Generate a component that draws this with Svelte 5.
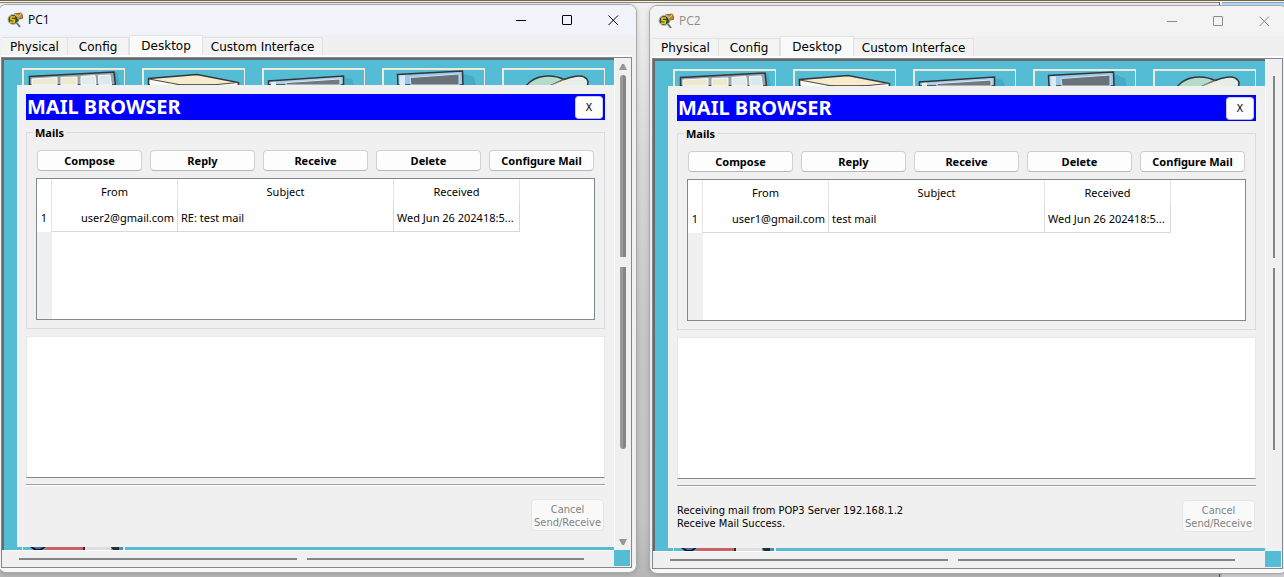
<script>
  const tabs = ['Physical', 'Config', 'Desktop', 'Custom Interface'];
  const actions = ['Compose', 'Reply', 'Receive', 'Delete', 'Configure Mail'];
  const windows = [
    {
      id: 'pc1',
      title: 'PC1',
      active: true,
      mails: [{ from: 'user2@gmail.com', subject: 'RE: test mail', received: 'Wed Jun 26 202418:5...' }],
      status: []
    },
    {
      id: 'pc2',
      title: 'PC2',
      active: false,
      mails: [{ from: 'user1@gmail.com', subject: 'test mail', received: 'Wed Jun 26 202418:5...' }],
      status: ['Receiving mail from POP3 Server 192.168.1.2', 'Receive Mail Success.']
    }
  ];
</script>

{#snippet tileArt(kind)}
  <svg class="art" viewBox="0 0 99 15" aria-hidden="true">
    {#if kind === 0}
      <path d="M80 3 L93 2 L96 15 H80Z" fill="#46abc4" />
      <path d="M5.5 15 V6.5 L90 2 L91.500 15Z" fill="#9aa3ac" stroke="#33363b" stroke-width="1.500" />
      <path d="M8 15 V9 L33 7.500 V15Z" fill="#ece9cf" stroke="#f8fafa" />
      <path d="M37 15 V7.500 L53 7 V15Z" fill="#ece9cf" stroke="#f8fafa" />
      <path d="M57 15 V6.500 L71 5.500 L72 15Z" fill="#e2ecea" stroke="#f8fafa" />
      <path d="M75 15 L74.500 5.500 L86 5 L87.500 15Z" fill="#d9eaee" stroke="#f8fafa" />
    {:else if kind === 1}
      <path d="M4.500 15 V8.500 L53 4.500 L94.500 12.500 V15Z" fill="#f6eccb" stroke="#33363b" stroke-width="1.500" />
      <path d="M6 15 V10 L36 15Z" fill="#fdfdf8" />
      <path d="M5 9 L40 15.500" stroke="#4a4a46" />
      <path d="M62 15.500 L94 12.500 V16Z" fill="#fdfdf8" stroke="#4a4a46" />
    {:else if kind === 2}
      <path d="M78 7 L88 9 L90 15 H78Z" fill="#46abc4" />
      <path d="M4.500 15 V11 L79.500 6 V15Z" fill="#a9cfe8" stroke="#33363b" stroke-width="1.500" />
      <path d="M7 15 V12 L12 11.700 V15Z" fill="#e3f1f8" />
      <path d="M22 15 V12.500 L76 9 V15Z" fill="#70797f" stroke="#dbe9f2" />
    {:else if kind === 3}
      <path d="M78 3 L90 7 L92 15 H78Z" fill="#46abc9" />
      <path d="M14 15 L13.500 4.500 L78.500 1 L79 15Z" fill="#9cc8e8" stroke="#33363b" stroke-width="1.500" />
      <path d="M15.500 15 V5.500 L21 5.300 V15Z" fill="#d8e9f4" />
      <path d="M27 15 L26 7.500 L75 4 V15Z" fill="#697279" stroke="#cfe3f0" />
    {:else if kind === 4}
      <path d="M22 16 C31 4 49 4 60 9.500 L46 16Z" fill="#b5dccb" stroke="#33363b" stroke-width="1.500" />
      <path d="M45 16 L62 9 C70 6 77 5 80 7 C84 9 85 12 83 16Z" fill="#e6eee8" />
      <path d="M45 16 L62 9" stroke="#7f8a86" fill="none" />
      <path d="M60 9.500 C68 6 77 5 80 7 C84 9 85 12 83 16" fill="none" stroke="#33363b" stroke-width="1.500" />
      <path d="M49 15 L62 10 L66 12 L58 16Z" fill="#f2ecd8" />
    {/if}
  </svg>
{/snippet}

{#snippet appIcon()}
  <svg class="app-icon" viewBox="0 0 16 16" aria-hidden="true">
    <path d="M7 2 L14.500 1 L16 6 L9 8Z" fill="#c98b2b" stroke="#6b4612" stroke-width="0.800" />
    <path d="M7 2 L12 4.500 L14.500 1" fill="none" stroke="#f2c766" />
    <path d="M9 10 L13 15" stroke="#6c6f74" stroke-width="2" />
    <circle cx="6" cy="7.500" r="5" fill="#3b4a1c" stroke="#b9bdc0" />
    <path d="M8.500 4 L12 9 L8 11Z" fill="#1d5f1f" />
    <path d="M8 5 L4 5 L4 7.500 L7.500 8 L7 10.500 L3 10" fill="none" stroke="#f0c419" stroke-width="1.600" />
  </svg>
{/snippet}

<main class="desktop">
  <div class="app-strip" aria-hidden="true"><div class="edge"></div><div class="sky"></div></div>
  <div class="app-strip foot" aria-hidden="true"><div class="edge"></div><div class="sky"></div></div>
  <div class="windows">
    {#each windows as win (win.id)}
      <section class="window" class:inactive={!win.active} aria-label={win.title}>
        <header class="titlebar">
          {@render appIcon()}
          <h1>{win.title}</h1>
          <button class="control" aria-label="Minimize">
            <svg viewBox="0 0 11 11"><path d="M0 5.500 H10" /></svg>
          </button>
          <button class="control" aria-label="Maximize">
            <svg viewBox="0 0 11 11"><rect x="0.500" y="0.500" width="9" height="9" rx="0.500" /></svg>
          </button>
          <button class="control" aria-label="Close">
            <svg viewBox="0 0 11 11"><path d="M0.500 0.500 L10 10 M10 0.500 L0.500 10" /></svg>
          </button>
        </header>

        <div class="tabs" role="tablist">
          {#each tabs as tab, i}
            <button role="tab" class:wide={i === 1 || i === 2} class:selected={i === 2} aria-selected={i === 2}>{tab}</button>
          {/each}
        </div>

        <div class="frame">
          <div class="viewport">
            <div class="tiles">
              {#each [0, 1, 2, 3, 4] as kind}
                <div class="tile">{@render tileArt(kind)}</div>
              {/each}
            </div>

            <div class="mail">
              <div class="banner">
                <h2>MAIL BROWSER</h2>
                <button class="push close" aria-label="Close mail browser">X</button>
              </div>

              <fieldset>
                <legend>Mails</legend>
                <div class="actions">
                  {#each actions as action}
                    <button class="push">{action}</button>
                  {/each}
                </div>
                <div class="list">
                  <table>
                    <colgroup><col class="c-num" /><col class="c-side" /><col class="c-subject" /><col class="c-side" /></colgroup>
                    <thead>
                      <tr><td></td><th scope="col">From</th><th scope="col">Subject</th><th scope="col">Received</th></tr>
                    </thead>
                    <tbody>
                      {#each win.mails as mail, n}
                        <tr>
                          <th scope="row">{n + 1}</th>
                          <td class="from">{mail.from}</td>
                          <td>{mail.subject}</td>
                          <td>{mail.received}</td>
                        </tr>
                      {/each}
                    </tbody>
                  </table>
                </div>
              </fieldset>

              <textarea class="body" aria-label="Message" readonly></textarea>

              <footer>
                <p>
                  {#each win.status as line}<span>{line}</span>{/each}
                </p>
                <button class="push cancel" disabled>Cancel<br />Send/Receive</button>
              </footer>
            </div>

            <div class="peek">
              <svg viewBox="0 0 103 3" aria-hidden="true">
                <path d="M0 0 H1 V3 H0Z M101 0 H103 V3 H101Z" fill="#ece9d8" />
                <path d="M8 0 H24 L20 3 H12Z" fill="#15161c" />
                <path d="M11 0 H21 L18 2 H14Z" fill="#4a6ca8" />
                <path d="M25 0 H62 V3 H22Z" fill="#cc6163" />
                <path d="M62 0 H89 V3 H62Z" fill="#dedede" />
                <path d="M61 0 H63 V3 H61Z M89 0 H97 V3 H91Z" fill="#2a2c30" />
                <path d="M97 0 H101 V3 H97Z" fill="#3b93c4" />
              </svg>
            </div>
          </div>

          <div class="vscroll" aria-hidden="true">
            <svg class="arrow" viewBox="0 0 8 6"><path d="M3 0 H5 L8 6 H0Z" /></svg>
            <i class="thumb"></i>
            <i class="thumb second"></i>
            <i class="rest"></i>
            <svg class="arrow" viewBox="0 0 8 6"><path d="M0 0 H8 L5 6 H3Z" /></svg>
          </div>
          <div class="hscroll" aria-hidden="true"><i></i><i></i></div>
          <div class="corner"></div>
        </div>
      </section>
    {/each}
  </div>
</main>

<style>
  :global(body) {
    overflow: hidden;
    background: #c4c4c4;
  }

  * {
    box-sizing: border-box;
  }

  .desktop {
    position: relative;
    min-height: 100vh;
    padding-top: 4px;
    overflow: hidden;
    background: linear-gradient(#f0f0f0 0, #d9d9d9 150px, #c6c6c6 340px, #c4c4c4 520px, #b6b6b6 100%);
    color: #000;
    font: 11px/15px "Noto Sans", sans-serif;
  }

  .app-strip {
    position: absolute;
    inset: 0 0 auto;
    display: flex;
    height: 7px;
    border-top: 1px solid #75663a;
    padding-top: 1px;
    background: #f4f2ee;
  }

  .app-strip.foot {
    inset: auto 0 0;
    height: 5px;
    border: 0;
    padding: 0;
    background: none;
  }

  .edge {
    width: 95%;
    border-top: 1px solid #85858d;
    border-right: 1px solid #55555d;
    background: #efefef;
  }

  .foot .edge {
    border-top: 0;
    background: none;
  }

  .sky {
    flex: 1;
    margin-left: 2px;
    border-top: 1px solid #80a8cc;
    background: #b8daf6;
  }

  .foot .sky {
    border: 0;
    background: #d0d2d4;
  }

  .windows {
    position: relative;
    display: flex;
    align-items: flex-start;
    gap: 12px;
    margin: 0 -4px 0 -2px;
  }

  .window {
    flex: 1;
    min-width: 0;
    padding: 0 4px 4px 2px;
    border: 1px solid #a8a8a8;
    border-radius: 8px;
    background: #f0f0f0;
    box-shadow: inset 0 -4px 0 #f8f8f8, 0 1px 5px rgba(0, 0, 0, 0.15);
  }

  .window.inactive {
    margin-top: 1px;
  }

  .titlebar {
    display: flex;
    align-items: center;
    height: 30px;
    margin: 0 -4px 0 -2px;
    padding-left: 8px;
    border-radius: 7px 7px 0 0;
    background: #f0f3f9;
  }

  .inactive .titlebar {
    background: #f3f3f3;
    color: #8c8c8c;
  }

  .app-icon {
    width: 16px;
    height: 16px;
  }

  h1 {
    flex: 1;
    margin: 0 0 0 5px;
    font: 12px/16px "Open Sans", sans-serif;
  }

  .control {
    display: grid;
    place-items: center;
    width: 46px;
    height: 30px;
    padding: 0;
    border: 0;
    background: none;
    color: inherit;
  }

  .control svg {
    width: 11px;
    height: 11px;
    fill: none;
    stroke: currentColor;
  }

  .tabs {
    display: flex;
    align-items: flex-end;
    height: 22px;
    padding-left: 1px;
    border-bottom: 2px solid #fcfcfc;
  }

  .tabs button {
    height: 18px;
    padding: 1px 8px 0;
    border: 1px solid #e2e2e2;
    border-width: 1px 1px 0 0;
    background: #f3f3f3;
    color: #000;
    font: 12px/16px "DejaVu Sans", sans-serif;
    white-space: nowrap;
  }

  .tabs .wide {
    padding: 1px 11px 0;
  }

  .tabs .selected {
    height: 20px;
    border-left-width: 1px;
    background: #fafafa;
  }

  .frame {
    display: grid;
    grid-template-columns: minmax(0, 1fr) 17px;
    grid-template-rows: auto 17px;
    border: 1px solid #828790;
  }

  .viewport {
    padding-top: 8px;
    border: 2px solid #696969;
    border-width: 2px 0 0 2px;
    background: #54bdd5;
  }

  .tiles {
    display: flex;
    justify-content: space-between;
    padding: 0 9px 0 18px;
  }

  .tile {
    width: 103px;
    height: 17px;
    border: 2px solid #ece9d8;
    border-bottom: 0;
    border-right-width: 1px;
  }

  .art {
    display: block;
    width: 99px;
    height: 15px;
  }

  .mail {
    margin-left: 13px;
    padding: 9px 9px 16px;
    background: #f0f0f0;
  }

  .banner {
    display: flex;
    align-items: center;
    justify-content: space-between;
    height: 26px;
    padding: 0 2px 0 1px;
    background: #00f;
  }

  h2 {
    margin: 0;
    color: #fff;
    font: bold 20px/26px "Noto Sans", sans-serif;
  }

  .push {
    height: 21px;
    padding: 0;
    border: 1px solid #d0d0d0;
    border-bottom-color: #b8b8b8;
    border-radius: 4px;
    background: #fdfdfd;
    color: #000;
    font: bold 11px/19px "Noto Sans", sans-serif;
    white-space: nowrap;
  }

  .push.close {
    width: 28px;
    height: 23px;
    padding-top: 1px;
    font: 11px/20px "DejaVu Sans Condensed", "DejaVu Sans", sans-serif;
  }

  fieldset {
    min-width: 0;
    margin: 5px 0 0;
    padding: 10px 9px 8px;
    border: 1px solid #dcdcdc;
  }

  legend {
    margin-left: -3px;
    padding: 0 2px;
    font: bold 11px/15px "Noto Sans", sans-serif;
  }

  .actions {
    display: grid;
    grid-template-columns: repeat(5, 1fr);
    gap: 8px;
    padding: 0 1px;
  }

  .list {
    height: 142px;
    margin-top: 7px;
    border: 1px solid #828790;
    background: linear-gradient(90deg, #f0f0f0 15px, #fff 15px);
  }

  table {
    width: 483px;
    border-collapse: separate;
    border-spacing: 0;
    table-layout: fixed;
    background: #fff;
  }

  .c-num {
    width: 15px;
  }

  .c-side {
    width: 126px;
  }

  .c-subject {
    width: 216px;
  }

  th,
  td {
    height: 30px;
    padding: 1px 3px 0;
    border-right: 1px solid #d8d8d8;
    font-weight: normal;
    text-align: left;
    white-space: nowrap;
  }

  thead th,
  thead td {
    height: 23px;
    border-color: #e5e5e5;
    text-align: center;
  }

  tbody td {
    border-bottom: 1px solid #d8d8d8;
  }

  tbody th {
    padding: 1px 0 0;
    border-color: #e5e5e5;
    text-align: center;
  }

  td.from {
    text-align: right;
  }

  .body {
    display: block;
    width: 100%;
    height: 142px;
    margin-top: 7px;
    padding: 4px;
    border: 1px solid #e8e8e8;
    border-bottom-color: #858585;
    outline: 0;
    background: #fff;
    resize: none;
  }

  footer {
    display: flex;
    justify-content: space-between;
    margin-top: 6px;
    padding: 14px 1px 0 0;
    border-top: 1px solid #a0a0a0;
    box-shadow: inset 0 1px 0 #fff;
  }

  p {
    margin: 4px 0 0;
    font: 11px/13px "DejaVu Sans Condensed", "DejaVu Sans", sans-serif;
  }

  p span {
    display: block;
  }

  .push.cancel {
    width: 73px;
    height: 32px;
    padding-top: 1px;
    border-color: #e6e6e6;
    background: #f9f9f9;
    color: #838383;
    font: 11px/13px "DejaVu Sans Condensed", "DejaVu Sans", sans-serif;
  }

  .peek {
    height: 3px;
    padding-left: 18px;
  }

  .peek svg {
    display: block;
    width: 103px;
    height: 3px;
  }

  .vscroll {
    display: flex;
    flex-direction: column;
    align-items: center;
    padding: 6px 0 5px;
    border-left: 1px solid #fff;
  }

  .arrow {
    width: 8px;
    height: 6px;
    fill: #969696;
  }

  .thumb {
    flex: 183;
    width: 6px;
    margin-top: 5px;
    border-radius: 3px 3px 0 0;
    background: linear-gradient(90deg, #999 50%, #858585 50%);
  }

  .thumb.second {
    margin-top: 10px;
    border-radius: 0 0 3px 3px;
  }

  .rest {
    flex: 90;
  }

  .inactive .thumb {
    width: 2px;
    border-radius: 0;
    background: #858585;
  }

  .inactive .arrow {
    visibility: hidden;
  }

  .hscroll {
    display: flex;
    align-items: center;
    gap: 10px;
    padding: 0 30px 0 17px;
    border-top: 1px solid #fff;
  }

  .hscroll i {
    flex: 1;
    height: 2px;
    background: #858585;
  }

  .corner {
    margin: 0 1px 1px 0;
    background: #54bdd5;
  }
</style>
